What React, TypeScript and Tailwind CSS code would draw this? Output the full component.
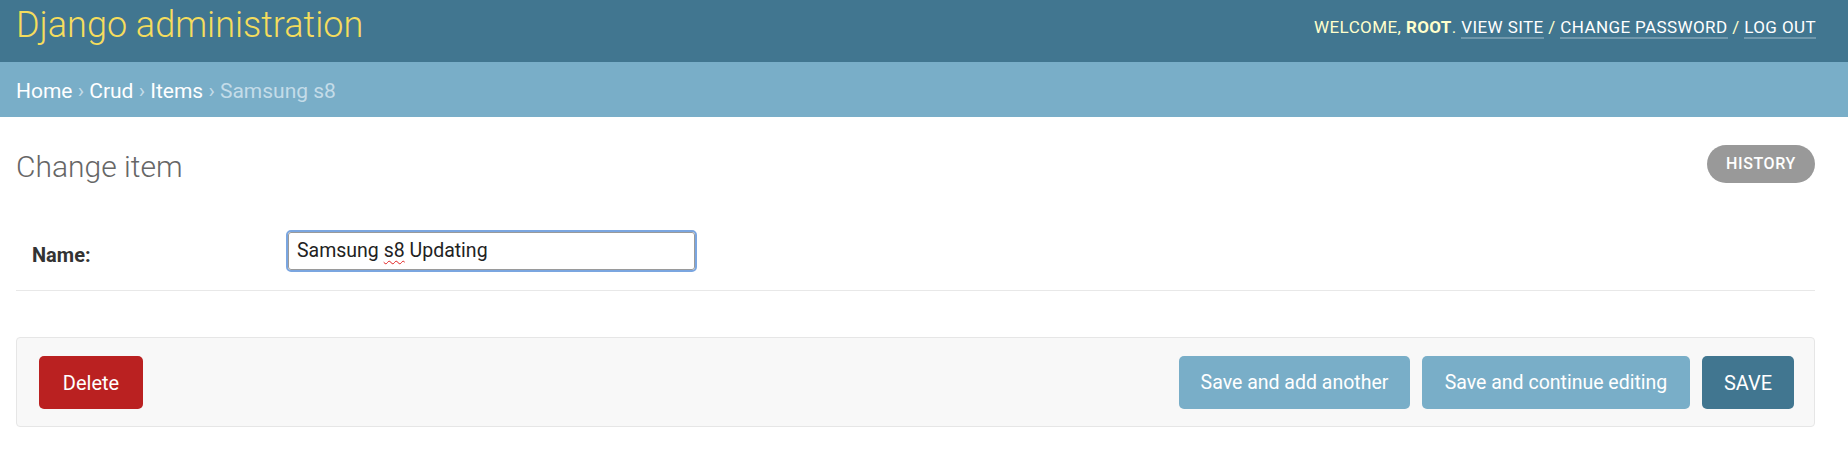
export default function App() {
  return (
    <div className="min-h-[473px] bg-white font-[family-name:Roboto,'Liberation_Sans',sans-serif] text-[#333]">
      <header className="flex h-[62px] items-start justify-between bg-[#417690] pl-[16px] pr-[32px]">
        <h1 className="mt-[5px] text-[36px] leading-[40px] font-light text-[#f5dd5d]">Django administration</h1>
        <div className="mt-[17px] text-[17px] leading-[20px] tracking-[0.4px] uppercase text-[#ffffcc]">
          Welcome, <strong className="font-bold">root</strong>.{" "}
          <a className="border-b-2 border-white/25 text-white">View site</a> /{" "}
          <a className="border-b-2 border-white/25 text-white">Change password</a> /{" "}
          <a className="border-b-2 border-white/25 text-white">Log out</a>
        </div>
      </header>
      <div className="h-[55px] bg-[#79aec8] pl-[16px] pt-[17px] text-[21px] leading-[24px] text-[#c4dce8]">
        <a className="text-white">Home</a> › <a className="text-white">Crud</a> › <a className="text-white">Items</a> › Samsung s8
      </div>
      <div className="pl-[16px] pr-[33px] pt-[28px]">
        <div className="flex h-[38px] items-start justify-between">
          <h1 className="mt-[4px] text-[30px] leading-[36px] font-light text-[#666]">Change item</h1>
          <a className="flex h-[38px] w-[108px] items-center justify-center rounded-full bg-[#999] text-[16px] font-medium tracking-[0.6px] uppercase text-white">
            History
          </a>
        </div>
        <div className="mt-[29px] flex border-b border-[#e8e8e8] px-[16px] py-[18px]">
          <label className="mt-[12.7px] w-[254px] shrink-0 text-[20px] leading-[24px] font-bold text-[#333]">Name:</label>
          <div className="h-[42px] w-[411px] rounded-[5px] border-2 border-[#7ba6e0]">
            <div className="flex h-full items-center rounded-[3px] border border-[#9a9a9a] pl-[8px] text-[19.5px] leading-[24px] text-[#222]">
              <span>
                Samsung{" "}
                <span className="underline decoration-wavy decoration-[#e02020] decoration-1 underline-offset-[3px]">s8</span>{" "}
                Updating
              </span>
            </div>
          </div>
        </div>
        <div className="mt-[46px] flex items-center justify-between rounded-[4px] border border-[#e6e6e6] bg-[#f8f8f8] pt-[18px] pb-[17px] pl-[22px] pr-[20px]">
          <button className="h-[53px] w-[104px] rounded-[5px] bg-[#ba2121] text-[20px] leading-[24px] text-white">Delete</button>
          <div className="flex gap-[12px]">
            <button className="h-[53px] w-[231px] rounded-[5px] bg-[#79aec8] text-[19.5px] leading-[24px] text-white">Save and add another</button>
            <button className="h-[53px] w-[268px] rounded-[5px] bg-[#79aec8] text-[19.5px] leading-[24px] text-white">Save and continue editing</button>
            <button className="h-[53px] w-[92px] rounded-[5px] bg-[#417690] text-[20px] leading-[24px] text-white">SAVE</button>
          </div>
        </div>
      </div>
    </div>
  );
}
